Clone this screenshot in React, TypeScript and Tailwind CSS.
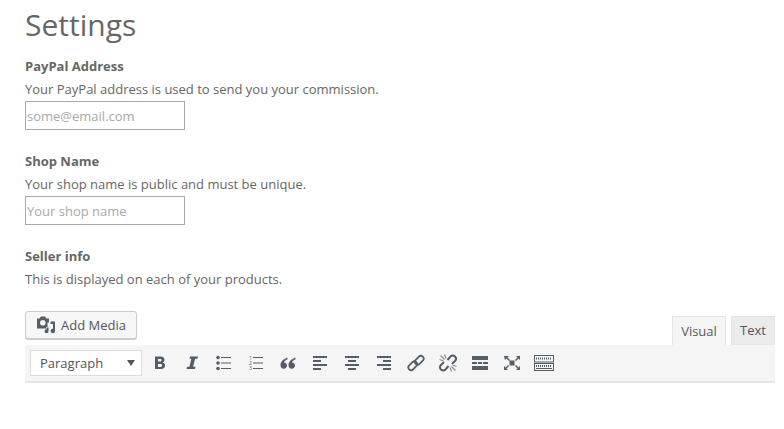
import type { ReactNode } from "react";

const ink = "#555d66";

function Ico({ children }: { children: ReactNode }) {
  return (
    <span className="flex h-5 w-8 items-center justify-center">
      <svg width="20" height="20" viewBox="0 0 20 20" fill={ink}>
        {children}
      </svg>
    </span>
  );
}

const lines = (rows: [number, number, number][]) =>
  rows.map(([x, y, w], i) => <rect key={i} x={x} y={y} width={w} height="2" />);

function Field({ label, help, placeholder }: { label: string; help: string; placeholder: string }) {
  return (
    <div className="flex flex-col">
      <label className="h-[18px] text-[13px] leading-[18px] font-bold text-[#666]">{label}</label>
      <p className="mt-[5px] h-[18px] text-[13px] leading-[18px] text-[#666]">{help}</p>
      <input
        placeholder={placeholder}
        className="mt-[3px] h-[29px] w-[160px] border border-[#a9a9a9] bg-white px-px text-[13px] outline-none placeholder:text-[#a9a9a9]"
      />
    </div>
  );
}

export default function App() {
  return (
    <div className="h-[429px] w-[784px] overflow-hidden bg-white pr-[9px] pl-[25px] font-['Open_Sans',sans-serif] text-[#666]">
      <h1 className="pt-[4px] text-[30px] leading-[41px] font-normal text-[#666]">Settings</h1>
      <div className="mt-[12px] flex flex-col gap-[22px]">
        <Field
          label="PayPal Address"
          help="Your PayPal address is used to send you your commission."
          placeholder="some@email.com"
        />
        <Field
          label="Shop Name"
          help="Your shop name is public and must be unique."
          placeholder="Your shop name"
        />
        <div className="flex flex-col">
          <label className="h-[18px] text-[13px] leading-[18px] font-bold text-[#666]">Seller info</label>
          <p className="mt-[5px] h-[18px] text-[13px] leading-[18px] text-[#666]">
            This is displayed on each of your products.
          </p>
        </div>
      </div>

      <div className="mt-[23px] flex items-end justify-between">
        <button className="mb-[6px] flex h-[28px] w-[112px] items-center justify-center gap-[6px] rounded-[3px] border border-[#ccc] bg-[#f7f7f7] pl-px text-[13px] text-[#555] shadow-[0_1px_0_#ccc]">
          <svg width="18" height="18" viewBox="0 0 18 18" fill={ink}>
            <path
              fillRule="evenodd"
              d="M0 2.500h2.500L4 .5h4l1.500 2H12v4h-1.500V11H9v1.500H0zM5.800 4a2.800 2.800 0 1 0 0 5.600 2.800 2.800 0 0 0 0-5.600z"
            />
            <path d="M18 5.500V15a2.200 2.200 0 1 1-2-2.200V8h-2.500V5.500z" />
            <path d="M11.500 11.500V15.300a2 2 0 1 1-2-2v-1.800z" />
          </svg>
          <span className="pt-px">Add Media</span>
        </button>
        <div className="flex gap-[5px]">
          <div className="flex h-[29px] w-[54px] items-center justify-center border border-b-0 border-[#e5e5e5] bg-[#f5f5f5] pt-px text-[13px] text-[#555]">
            Visual
          </div>
          <div className="flex h-[29px] w-[44px] items-center justify-center border border-[#e5e5e5] bg-[#ebebeb] pt-px text-[13px] text-[#555]">
            Text
          </div>
        </div>
      </div>

      <div className="flex h-[38px] items-center border-b-2 border-[#e5e5e5] bg-[#f5f5f5] pl-[5px]">
        <div className="relative mr-[2px] flex h-[26px] w-[112px] items-center border border-[#ddd] bg-white pt-px pl-[9px] text-[13px] text-[#555]">
          Paragraph
          <span className="absolute top-[9px] right-[6px] h-0 w-0 border-x-[4px] border-t-[6px] border-x-transparent border-t-[#555]" />
        </div>
        <Ico>
          <path
            fillRule="evenodd"
            d="M5 3.500h5.500c2.600 0 4 1.300 4 3.200 0 1.300-.7 2.300-1.900 2.800 1.600.4 2.500 1.500 2.500 3 0 2.200-1.600 3.500-4.300 3.500H5zm3 2.400v2.700h2c1 0 1.500-.5 1.500-1.400 0-.8-.5-1.300-1.500-1.300zm0 5v3h2.400c1 0 1.600-.6 1.600-1.500 0-1-.6-1.500-1.600-1.500z"
          />
        </Ico>
        <Ico>
          <path d="M8 3.500h8l-.5 2.200h-2.400l-2 8.100h2.400l-.5 2.200H4.500l.5-2.200h2.400l2-8.100H7.500z" />
        </Ico>
        <Ico>
          <circle cx="4" cy="4.500" r="1.800" />
          <circle cx="4" cy="10" r="1.800" />
          <circle cx="4" cy="15.500" r="1.800" />
          <rect x="7" y="4" width="10" height="1" />
          <rect x="7" y="9.500" width="10" height="1" />
          <rect x="7" y="15" width="10" height="1" />
        </Ico>
        <Ico>
          <text x="3" y="7" fontSize="5" fontFamily="Open Sans, sans-serif">1</text>
          <text x="3" y="12" fontSize="5" fontFamily="Open Sans, sans-serif">2</text>
          <text x="3" y="17" fontSize="5" fontFamily="Open Sans, sans-serif">3</text>
          <rect x="7" y="4" width="10" height="1" />
          <rect x="7" y="9.500" width="10" height="1" />
          <rect x="7" y="15" width="10" height="1" />
        </Ico>
        <Ico>
          <path d="M9.500 4.500C5 6 2.500 9 2.500 12.200c0 2.200 1.300 3.600 3.200 3.600s3.300-1.300 3.300-3.200c0-1.800-1.300-3-3-3 .4-1.300 1.700-2.500 3.500-3.300z" />
          <path d="M17.500 4.500c-4.500 1.500-7 4.500-7 7.700 0 2.200 1.300 3.600 3.200 3.600s3.300-1.300 3.300-3.200c0-1.800-1.300-3-3-3 .4-1.300 1.700-2.500 3.500-3.300z" />
        </Ico>
        <Ico>
          {lines([[3, 3, 14], [3, 7, 8], [3, 11, 14], [3, 15, 8]])}
        </Ico>
        <Ico>
          {lines([[3, 3, 14], [6, 7, 8], [3, 11, 14], [6, 15, 8]])}
        </Ico>
        <Ico>
          {lines([[3, 3, 14], [9, 7, 8], [3, 11, 14], [9, 15, 8]])}
        </Ico>
        <Ico>
          <g fill="none" stroke={ink} strokeWidth="1.800">
            <rect x="1.750" y="10" width="10" height="5.500" rx="2.750" transform="rotate(-45 6.750 12.750)" />
            <rect x="8.250" y="4.500" width="10" height="5.500" rx="2.750" transform="rotate(-45 13.250 7.250)" />
          </g>
        </Ico>
        <Ico>
          <g fill="none" stroke={ink} strokeWidth="2">
            <path d="M9.500 7 12.500 3.500a3.300 3.300 0 0 1 4.500 0 3.300 3.300 0 0 1 0 4.500L14 11" />
            <path d="M10.500 13 7.500 16.500a3.300 3.300 0 0 1-4.500 0 3.300 3.300 0 0 1 0-4.500L6 9" />
          </g>
          <g fill="none" stroke="#8a8f94" strokeWidth="1.200">
            <path d="M1.500 6.500l4 1.500M6.500 1.500l1.500 4M2.500 2.500l4 4M18.500 13.500l-4-1.500M13.500 18.500l-1.500-4M17.500 17.500l-4-4" />
          </g>
        </Ico>
        <Ico>
          <rect x="2" y="3" width="16" height="4" />
          <rect x="2" y="9" width="5" height="2" />
          <rect x="8" y="9" width="4" height="2" />
          <rect x="13" y="9" width="5" height="2" />
          <rect x="2" y="13" width="16" height="4" />
        </Ico>
        <Ico>
          <rect x="7.500" y="7.500" width="5" height="5" />
          <path d="M2 3h5L5.500 4.500 8 7 7 8 4.500 5.500 3 7zM18 3v4l-1.500-1.500L14 8 13 7l2.500-2.500L14 3zM2 17v-4l1.500 1.500L6 12l1 1-2.500 2.500L6 17zM18 17h-4l1.500-1.500L13 13l1-1 2.500 2.500L18 13z" />
        </Ico>
        <Ico>
          <g fill="none" stroke={ink}>
            <rect x="0.500" y="2.500" width="19" height="6.500" />
            <rect x="0.500" y="10.500" width="19" height="7" />
            <path d="M2 5.500h16M2 13h16" strokeWidth="2" strokeDasharray="1 1" />
            <path d="M2 15.500h16" strokeWidth="1" />
          </g>
        </Ico>
      </div>
    </div>
  );
}
